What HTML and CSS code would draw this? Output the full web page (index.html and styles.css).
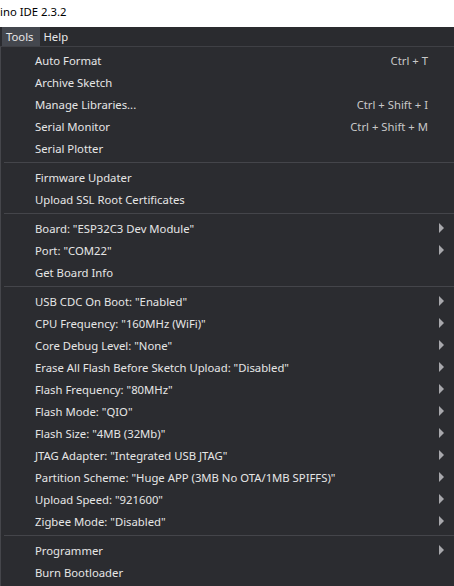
FILE: index.html
```html
<!DOCTYPE html>
<html>
<head>
<meta charset="utf-8">
<link rel="stylesheet" href="styles.css">
</head>
<body>
<div class="titlebar">ino IDE 2.3.2</div>
<div class="menubar">
  <div class="mb-item active">Tools</div>
  <div class="mb-item">Help</div>
</div>
<div class="menu">
  <div class="item"><span class="label">Auto Format</span><span class="key">Ctrl + T</span></div>
  <div class="item"><span class="label">Archive Sketch</span></div>
  <div class="item"><span class="label">Manage Libraries...</span><span class="key">Ctrl + Shift + I</span></div>
  <div class="item"><span class="label">Serial Monitor</span><span class="key">Ctrl + Shift + M</span></div>
  <div class="item"><span class="label">Serial Plotter</span></div>
  <div class="sep"></div>
  <div class="item"><span class="label">Firmware Updater</span></div>
  <div class="item"><span class="label">Upload SSL Root Certificates</span></div>
  <div class="sep"></div>
  <div class="item sub"><span class="label">Board: "ESP32C3 Dev Module"</span></div>
  <div class="item sub"><span class="label">Port: "COM22"</span></div>
  <div class="item"><span class="label">Get Board Info</span></div>
  <div class="sep"></div>
  <div class="item sub"><span class="label">USB CDC On Boot: "Enabled"</span></div>
  <div class="item sub"><span class="label">CPU Frequency: "160MHz (WiFi)"</span></div>
  <div class="item sub"><span class="label">Core Debug Level: "None"</span></div>
  <div class="item sub"><span class="label">Erase All Flash Before Sketch Upload: "Disabled"</span></div>
  <div class="item sub"><span class="label">Flash Frequency: "80MHz"</span></div>
  <div class="item sub"><span class="label">Flash Mode: "QIO"</span></div>
  <div class="item sub"><span class="label">Flash Size: "4MB (32Mb)"</span></div>
  <div class="item sub"><span class="label">JTAG Adapter: "Integrated USB JTAG"</span></div>
  <div class="item sub"><span class="label">Partition Scheme: "Huge APP (3MB No OTA/1MB SPIFFS)"</span></div>
  <div class="item sub"><span class="label">Upload Speed: "921600"</span></div>
  <div class="item sub"><span class="label">Zigbee Mode: "Disabled"</span></div>
  <div class="sep"></div>
  <div class="item sub"><span class="label">Programmer</span></div>
  <div class="item"><span class="label">Burn Bootloader</span></div>
</div>
</body>
</html>
```

FILE: styles.css
```css
html, body {
  margin: 0;
  padding: 0;
  height: 100%;
  overflow: hidden;
}
body {
  font-family: "Noto Sans", "Open Sans", sans-serif;
  font-size: 11.3px;
  background: #2b2c30;
}
.titlebar {
  height: 27px;
  background: #ffffff;
  color: #000;
  line-height: 23px;
  box-sizing: border-box;
}
.menubar {
  height: 19px;
  background: #2a2b2f;
  border-bottom: 1px solid #3f4045;
  display: flex;
  padding-left: 2px;
}
.mb-item {
  color: #e8e8e8;
  padding: 0 6px 0 4px;
  line-height: 19px;
}
.mb-item.active {
  background: #44474e;
}
.menu {
  background: #2b2c30;
  border-left: 1px solid #45464b;
  padding-top: 2px;
  height: 540px;
  box-sizing: border-box;
}
.item {
  height: 22px;
  display: flex;
  align-items: center;
  padding-left: 34px;
  padding-right: 26px;
  color: #e6e6e6;
  position: relative;
}
.label {
  flex: 1;
  white-space: nowrap;
}
.key {
  color: #c8c8c8;
}
.item.sub::after {
  content: "";
  position: absolute;
  right: 10px;
  top: 6px;
  width: 0;
  height: 0;
  border-top: 5px solid transparent;
  border-bottom: 5px solid transparent;
  border-left: 5px solid #a8a8ac;
}
.sep {
  height: 1px;
  background: #44454a;
  margin: 3px 0 3px 3px;
}
```
